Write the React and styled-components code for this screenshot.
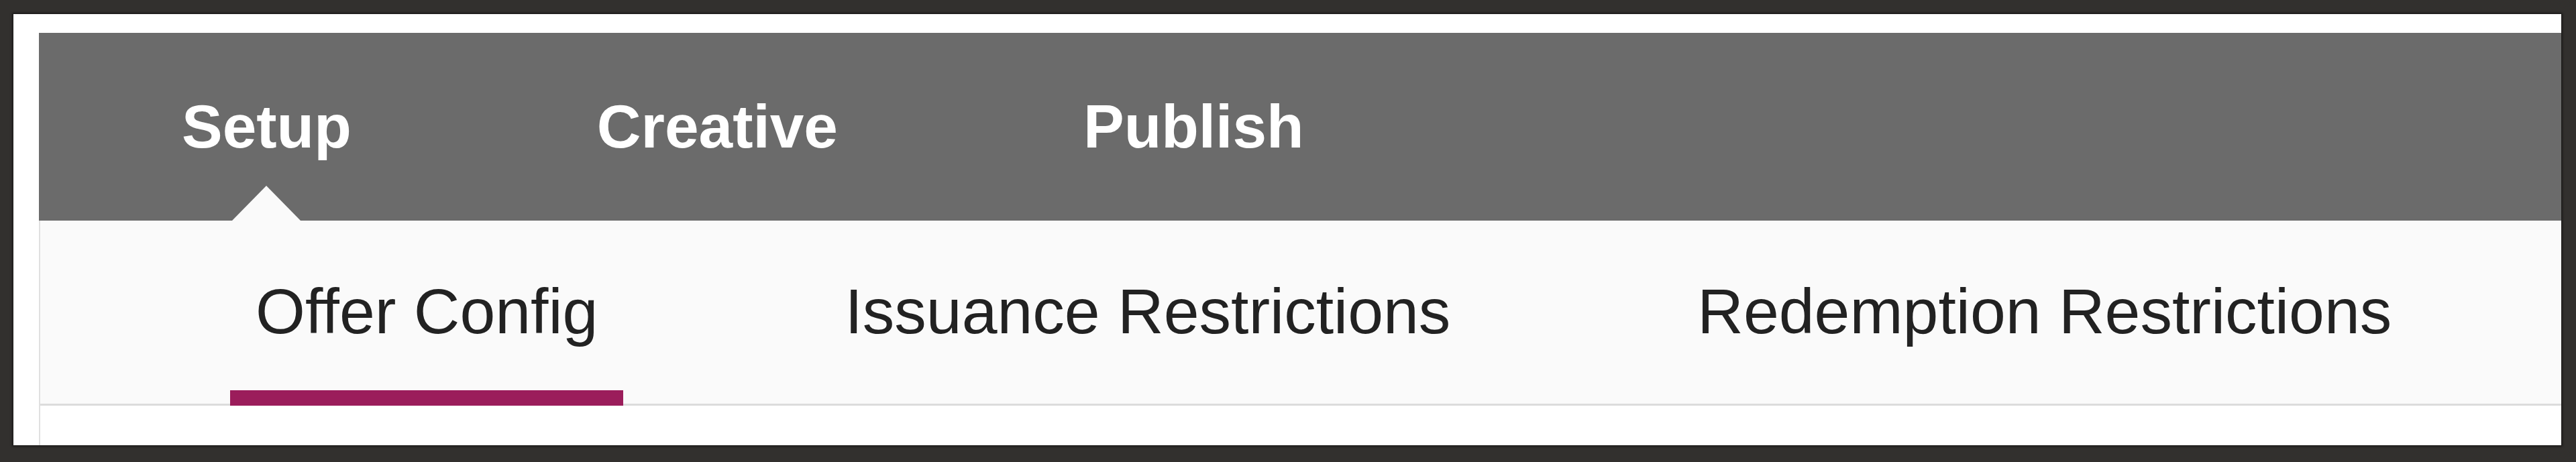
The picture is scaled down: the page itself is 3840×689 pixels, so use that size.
import React from "react"
import styled, { createGlobalStyle } from "styled-components"

const steps = ["Setup", "Creative", "Publish"]
const tabs = ["Offer Config", "Issuance Restrictions", "Redemption Restrictions"]

export default function App() {
  const activeStep = "Setup"
  const activeTab = "Offer Config"

  return (
    <>
      <GlobalStyle />
      <Page>
        <Frame>
          <Panel>
            {/* Main wizard steps */}
            <StepBar>
              {steps.map((step) => (
                <Step key={step} $active={step === activeStep}>
                  {step}
                </Step>
              ))}
            </StepBar>

            {/* Sub tabs of the current step */}
            <TabBar>
              {tabs.map((tab) => (
                <Tab key={tab} $active={tab === activeTab}>
                  {tab}
                </Tab>
              ))}
            </TabBar>

            <Body />
          </Panel>
        </Frame>
      </Page>
    </>
  )
}

// Styled-Components CSS
const GlobalStyle = createGlobalStyle`
  html, body {
    margin: 0;
    padding: 0;
    background: #32302e;
  }
  body {
    font-family: "Liberation Sans", Arial, sans-serif;
  }
`

const Page = styled.div`
  padding: 21px 22px 25px 20px;
  background: #32302e;
`

const Frame = styled.div`
  background: #ffffff;
  padding: 28px 0 0 38px;
  box-shadow: 0 0 3px 2px rgba(0, 0, 0, 0.45);
`

const Panel = styled.div`
  display: flex;
  flex-direction: column;
  border-left: 2px solid #e0e0e0;
`

const StepBar = styled.nav`
  display: flex;
  align-items: stretch;
  gap: 366px;
  height: 280px;
  padding-left: 213px;
  margin-left: -2px;
  background: #6b6b6b;
`

const Step = styled.div`
  position: relative;
  padding-top: 94px;
  font-size: 91px;
  line-height: 91px;
  font-weight: 700;
  color: #ffffff;

  &::after {
    content: "";
    display: ${({ $active }) => ($active ? "block" : "none")};
    position: absolute;
    left: 50%;
    bottom: 0;
    transform: translateX(-50%);
    border-left: 51px solid transparent;
    border-right: 51px solid transparent;
    border-bottom: 52px solid #fafafa;
  }
`

const TabBar = styled.div`
  display: flex;
  align-items: flex-start;
  gap: 292px;
  height: 273px;
  padding-left: 283px;
  background: #fafafa;
  border-bottom: 3px solid #dcdcdc;
`

const Tab = styled.div`
  box-sizing: border-box;
  height: 276px;
  padding: 88px 38px 0;
  font-size: 95px;
  line-height: 95px;
  color: #222222;
  white-space: nowrap;
  border-bottom: 23px solid ${({ $active }) => ($active ? "#9b1d5b" : "transparent")};
`

const Body = styled.div`
  height: 59px;
  background: #ffffff;
`
